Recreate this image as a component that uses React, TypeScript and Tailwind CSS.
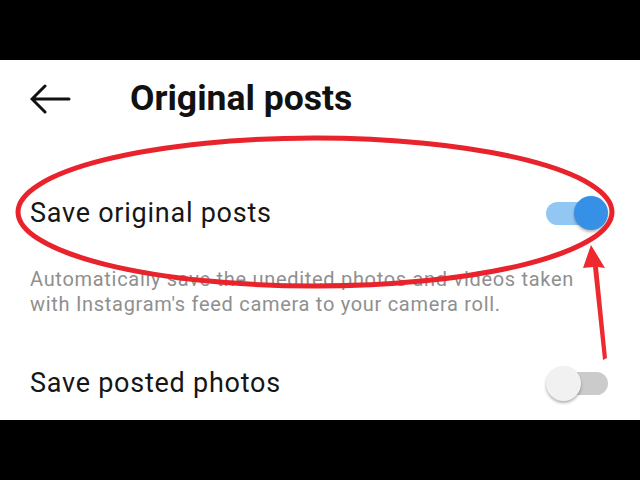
import { useState } from "react";

type ToggleProps = {
  on: boolean;
  onChange: () => void;
};

function Toggle({ on, onChange }: ToggleProps) {
  return (
    <button
      type="button"
      onClick={onChange}
      className="relative w-[62px] h-[36px] flex items-center shrink-0"
    >
      <span
        className={
          on
            ? "block w-[58px] h-[23px] rounded-full bg-[#92c7f3]"
            : "block w-[58px] h-[23px] ml-[4px] rounded-full bg-[#cbcbcb]"
        }
      />
      <span
        className={
          on
            ? "absolute right-0 top-[1px] w-[34px] h-[34px] rounded-full bg-[#3590e6] shadow-[0_2px_3px_rgba(0,0,0,0.3)]"
            : "absolute left-0 top-[1px] w-[35px] h-[35px] rounded-full bg-[#f1f1f1] shadow-[0_2px_3px_rgba(0,0,0,0.3)]"
        }
      />
    </button>
  );
}

export default function App() {
  const [saveOriginal, setSaveOriginal] = useState(true);
  const [savePosted, setSavePosted] = useState(false);

  return (
    <div className="relative w-[640px] h-[480px] bg-black font-['Roboto',sans-serif] overflow-hidden">
      <div className="h-[60px]" />
      <div className="h-[360px] bg-white">
        <div className="h-[78px] flex items-center px-[30px]">
          <svg width="41" height="30" viewBox="0 0 41 30" fill="none" stroke="#111" strokeWidth="3" strokeLinecap="round">
            <path d="M39 15H3M15 2L2 15l13 13" />
          </svg>
          <h1 className="ml-[59px] text-[35.5px] font-bold text-[#111] leading-none">Original posts</h1>
        </div>

        <div className="mt-[45px] h-[60px] flex items-center justify-between pl-[30px] pr-[32px]">
          <span className="text-[27px] tracking-[0.75px] text-[#161616]">Save original posts</span>
          <Toggle on={saveOriginal} onChange={() => setSaveOriginal(!saveOriginal)} />
        </div>

        <p className="mt-[24px] px-[30px] text-[20px] tracking-[0.7px] leading-[25px] text-[#8f8f8f]">
          Automatically save the unedited photos and videos taken
          <br />
          with Instagram's feed camera to your camera roll.
        </p>

        <div className="mt-[36px] h-[60px] flex items-center justify-between pl-[30px] pr-[32px]">
          <span className="text-[27px] tracking-[0.75px] text-[#161616]">Save posted photos</span>
          <Toggle on={savePosted} onChange={() => setSavePosted(!savePosted)} />
        </div>
      </div>
      <div className="h-[60px]" />

      {/* red annotation drawn on top of the screenshot */}
      <svg className="absolute inset-0 pointer-events-none" width="640" height="480" viewBox="0 0 640 480">
        <ellipse cx="315" cy="212" rx="297" ry="74" fill="none" stroke="#e8232b" strokeWidth="5" />
        <polygon points="591,245 605,268 598,267 607,358 603,360 593,267 583,268" fill="#ef2a2f" />
      </svg>
    </div>
  );
}
